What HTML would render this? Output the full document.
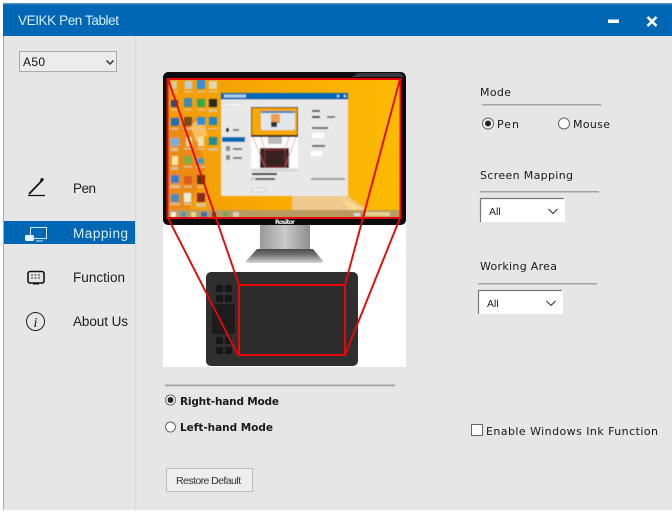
<!DOCTYPE html>
<html><head><meta charset="utf-8"><style>
html,body{margin:0;padding:0;background:#fff;width:672px;height:517px;overflow:hidden}
svg{display:block}
text{font-family:"Liberation Sans",sans-serif}
.d{font-family:"DejaVu Sans",sans-serif;font-size:11px;fill:#1a1a1a}
.n{font-size:13.5px;fill:#1c1c1c}
</style></head><body>
<svg width="672" height="517" viewBox="0 0 672 517" xmlns="http://www.w3.org/2000/svg">
<defs>
<linearGradient id="wp" x1="0" y1="0" x2="1" y2="0"><stop offset="0" stop-color="#f39a0c"/><stop offset=".3" stop-color="#f6a504"/><stop offset="1" stop-color="#fdbb02"/></linearGradient>
<linearGradient id="st" x1="0" y1="0" x2="1" y2="0"><stop offset="0" stop-color="#9a9a9a"/><stop offset=".5" stop-color="#c9c9c9"/><stop offset="1" stop-color="#8e8e8e"/></linearGradient>
<linearGradient id="st2" x1="0" y1="0" x2="0" y2="1"><stop offset="0" stop-color="#4a4a4a"/><stop offset=".45" stop-color="#777"/><stop offset="1" stop-color="#d6d6d6"/></linearGradient>
<filter id="b"><feGaussianBlur stdDeviation=".45"/></filter>
</defs>
<rect x="3" y="3" width="669" height="507" fill="#e6e6e6"/>
<rect x="3" y="3" width="669" height="33" fill="#0067b5"/>
<rect x="3" y="3" width="669" height="1.5" fill="#4f8db8"/>
<rect x="3" y="36" width="1" height="474" fill="#a9a9a9"/>
<rect x="135" y="36" width="1.5" height="474" fill="#d9d9d9"/>
<text x="18" y="25" font-size="13.5" fill="#d9edf9" textLength="101">VEIKK Pen Tablet</text>
<rect x="608" y="19.5" width="11" height="3.5" fill="#fff"/>
<path d="M647.5 17 L656.5 26 M656.5 17 L647.5 26" stroke="#fff" stroke-width="2.6"/>

<!-- device select -->
<rect x="19.5" y="51.5" width="97" height="20" fill="#ececec" stroke="#ababab"/>
<text x="23" y="66" font-size="12" fill="#111" textLength="22">A50</text>
<path d="M106.5 60.5 L110 64 L113.500 60.500" fill="none" stroke="#444" stroke-width="1.6"/>

<!-- nav -->
<rect x="4" y="221" width="131" height="23" fill="#0067b5"/>
<text class="n" x="73" y="193" textLength="23">Pen</text>
<text class="n" x="73" y="238" textLength="55" style="fill:#d9edf9">Mapping</text>
<text class="n" x="73" y="282" textLength="52">Function</text>
<text class="n" x="73" y="326" textLength="55">About Us</text>
<path d="M29 194 L42 180.500" stroke="#111" stroke-width="1.800" fill="none"/>
<path d="M41 181 L43 178.500" stroke="#111" stroke-width="3"/>
<path d="M28 195.500 H45" stroke="#111" stroke-width="1.200"/>
<rect x="30.500" y="227.500" width="16" height="11" fill="none" stroke="#d5e8f5"/>
<path d="M36 241 H43" stroke="#d5e8f5"/>
<rect x="25" y="235" width="9" height="6" rx="1.500" fill="#e8f2f9"/>
<rect x="28" y="271.500" width="16" height="11.500" rx="2" fill="none" stroke="#111" stroke-width="1.600"/>
<path d="M31 275 h2 m1.500 0 h2 m1.500 0 h2 M31 278 h2 m1.500 0 h2 m1.500 0 h2" stroke="#333"/>
<path d="M33 284 h6" stroke="#111"/>
<circle cx="35.500" cy="321.500" r="9" fill="none" stroke="#222" stroke-width="1"/>
<text x="33.500" y="327" font-size="14" font-style="italic" style="font-family:'Liberation Serif',serif" fill="#111">i</text>

<!-- picture panel -->
<rect x="163" y="72" width="243" height="295" fill="#fff"/>
<path d="M260 225 H310 V250 H260 Z" fill="url(#st)"/>
<path d="M257 249 H313 L323 261 Q323 263 320 263 H249 Q246 263 246 261 Z" fill="url(#st2)"/>
<rect x="163" y="72" width="243" height="153" rx="5" fill="#0c0c0c"/>
<path d="M358 73 H400 L404 77 H352 Z" fill="#3a3a3a"/>
<rect x="167" y="79" width="234" height="139" fill="url(#wp)"/>
<g filter="url(#b)">
<path d="M167 130 L196 118 L205 170 L186 218 H167Z" fill="#ec8a12"/>
<path d="M190 125 L202 118 L208 135 L196 142Z" fill="#f8c15a"/>
<path d="M292 196 H348 L365 208 V211 H292Z" fill="#eec88c"/>
<path d="M338 196 L365 210 H350Z" fill="#f9d98e"/>
<rect x="167" y="210" width="234" height="8" fill="#b89a60"/>
<g>
<rect x="171" y="81" width="6" height="8" fill="#d6cd92"/><rect x="185" y="81" width="7" height="8" fill="#b9cfde"/><rect x="197" y="80" width="8" height="9" fill="#2f8fe0"/><rect x="209" y="81" width="8" height="8" fill="#e0d8ae"/>
<rect x="171" y="100" width="7" height="7" fill="#264a8e"/><rect x="184" y="98" width="8" height="9" fill="#3d8bb5"/><rect x="197" y="99" width="8" height="8" fill="#30a84a"/><rect x="209" y="99" width="8" height="8" fill="#2a2a20"/>
<rect x="171" y="118" width="8" height="8" fill="#1d6fc0"/><rect x="184" y="117" width="8" height="9" fill="#7a4a1e"/><rect x="197" y="117" width="8" height="8" fill="#2c8fe0"/><rect x="209" y="117" width="8" height="8" fill="#1d88c8"/>
<rect x="171" y="138" width="8" height="8" fill="#6fb2de"/><rect x="186" y="137" width="6" height="9" fill="#edd98a"/><rect x="198" y="137" width="6" height="9" fill="#ece4b4"/><rect x="209" y="137" width="8" height="8" fill="#1f8d9a"/>
<rect x="172" y="156" width="6" height="9" fill="#f8e4a4"/><rect x="184" y="156" width="8" height="8" fill="#7aae3c"/><rect x="197" y="158" width="7" height="6" fill="#3aa0b8"/>
<rect x="171" y="175" width="8" height="8" fill="#2f7fd0"/><rect x="184" y="176" width="8" height="8" fill="#dc5a28"/><rect x="197" y="175" width="8" height="9" fill="#5a3218"/>
<rect x="171" y="194" width="8" height="8" fill="#3f8fc0"/><rect x="184" y="193" width="7" height="9" fill="#e4eed6"/><rect x="197" y="193" width="8" height="9" fill="#8c2a20"/>
</g>
<g fill="#d9c9a0" opacity=".85">
<rect x="171" y="91" width="7" height="1.500"/><rect x="184" y="91" width="9" height="1.500"/><rect x="197" y="91" width="8" height="1.500"/><rect x="208" y="91" width="10" height="1.500"/>
<rect x="171" y="109" width="7" height="1.500"/><rect x="184" y="109" width="8" height="1.500"/><rect x="197" y="109" width="8" height="1.500"/><rect x="208" y="109" width="9" height="3"/>
<rect x="171" y="128" width="7" height="1.500"/><rect x="184" y="128" width="9" height="1.500"/><rect x="196" y="128" width="10" height="1.500"/><rect x="208" y="128" width="10" height="1.500"/>
<rect x="171" y="148" width="7" height="3"/><rect x="184" y="148" width="8" height="1.500"/><rect x="197" y="148" width="8" height="1.500"/><rect x="208" y="148" width="10" height="3"/>
<rect x="171" y="167" width="7" height="3"/><rect x="184" y="166" width="8" height="1.500"/><rect x="196" y="166" width="10" height="1.500"/>
<rect x="170" y="185" width="10" height="3"/><rect x="184" y="186" width="8" height="1.500"/><rect x="197" y="186" width="8" height="1.500"/>
<rect x="170" y="203" width="10" height="2"/><rect x="184" y="203" width="8" height="2"/><rect x="196" y="203" width="10" height="4"/>
</g>
<rect x="171" y="212" width="5" height="5" fill="#f3efe6"/><rect x="181" y="212" width="5" height="5" fill="#4a9ab0"/><rect x="191" y="212" width="5" height="5" fill="#e6d68c"/><rect x="201" y="212" width="6" height="5" fill="#3a6aa8"/><rect x="212" y="212" width="4" height="5" fill="#444"/><rect x="223" y="212" width="6" height="5" fill="#7aa850"/><rect x="233" y="212" width="6" height="5" fill="#dccdb8"/>
<rect x="354" y="213" width="6" height="3" fill="#d8dce6"/><rect x="366" y="212" width="24" height="4" fill="#e6d090"/>
<!-- nested window -->
<rect x="221" y="93" width="127" height="103" fill="#e8e8e8"/>
<rect x="221" y="93" width="127" height="6.500" fill="#0067b5"/>
<rect x="224" y="94.500" width="22" height="3" fill="#a9cde8"/>
<rect x="337" y="95" width="2" height="2" fill="#cfe4f4"/><rect x="344" y="95" width="2" height="2" fill="#cfe4f4"/>
<rect x="224" y="103" width="18" height="4" fill="#f2f2f2" stroke="#ccc" stroke-width=".5"/>
<rect x="222" y="137" width="23" height="5" fill="#0067b5"/>
<rect x="226" y="128" width="3" height="4" fill="#222"/><rect x="226" y="146" width="4" height="5" fill="#888"/><rect x="226" y="155" width="4" height="5" fill="#888"/>
<rect x="233" y="129" width="6" height="2" fill="#777"/><rect x="233" y="148" width="9" height="2" fill="#777"/><rect x="233" y="157" width="9" height="2" fill="#777"/>
<rect x="251" y="107" width="47" height="61" fill="#fff"/>
<rect x="251" y="107" width="47" height="30" fill="#111"/>
<rect x="252" y="108" width="45" height="27" fill="#f7a800"/>
<rect x="261" y="111" width="34" height="19" fill="#dfe6ec"/><rect x="261" y="111" width="34" height="2" fill="#2c7fc0"/>
<rect x="271" y="114" width="9" height="9" fill="#e8a050"/><rect x="271" y="122" width="6" height="5" fill="#333"/>
<rect x="268" y="137" width="14" height="7" fill="#bbb"/>
<rect x="260" y="148" width="29" height="20" fill="#2a2a2a"/>
<rect x="265" y="150" width="20" height="17" fill="#352020" stroke="#b02020" stroke-width=".8"/>
<path d="M253 137 L265 167 M296 137 L285 167 M261 137 L265 150 M289 137 L285 150" stroke="#e27070" stroke-width=".6"/>
<rect x="251" y="170" width="47" height="1" fill="#bbb"/>
<rect x="252" y="173" width="25" height="2" fill="#222"/>
<circle cx="252" cy="179" r="1.300" fill="#fff" stroke="#555" stroke-width=".4"/><rect x="255" y="178" width="20" height="2" fill="#555"/>
<rect x="252" y="188" width="14" height="4" fill="#eee" stroke="#aaa" stroke-width=".4"/>
<rect x="312" y="110" width="8" height="2" fill="#555"/>
<rect x="312" y="116" width="8" height="2" fill="#333"/><rect x="327" y="116" width="8" height="2" fill="#777"/>
<rect x="312" y="127" width="16" height="2" fill="#666"/><rect x="312" y="133" width="12" height="5" fill="#fff"/>
<rect x="312" y="145" width="13" height="2" fill="#666"/><rect x="311" y="151" width="12" height="5" fill="#fff"/>
<rect x="311" y="178" width="34" height="2" fill="#999"/>
</g>
<rect x="167.500" y="79" width="233" height="139" fill="none" stroke="#e60808" stroke-width="2"/>
<text x="275" y="224" font-size="6" font-weight="bold" fill="#eee" textLength="20" style="font-family:'DejaVu Sans',sans-serif">Rositor</text>
<!-- tablet -->
<rect x="206" y="272" width="152" height="94" rx="5" fill="#2f2f30"/>
<g fill="#171718"><rect x="216" y="285" width="7" height="7" rx="1"/><rect x="225" y="285" width="7" height="7" rx="1"/><rect x="216" y="295" width="7" height="7" rx="1"/><rect x="225" y="295" width="7" height="7" rx="1"/>
<rect x="212" y="304" width="23" height="30" fill="#1c1c1d"/>
<rect x="216" y="337" width="7" height="7" rx="1"/><rect x="225" y="337" width="7" height="7" rx="1"/><rect x="216" y="347" width="7" height="7" rx="1"/><rect x="225" y="347" width="7" height="7" rx="1"/></g>
<rect x="239" y="285" width="106" height="70" fill="#2b2b2c" stroke="#e60808" stroke-width="2"/>
<path d="M168 79 L239 285 M168 218 L238 355 M400 79 L345 285 M400 218 L345 355" stroke="#e60808" stroke-width="1.900" fill="none"/>

<!-- right -->
<text class="d" x="480" y="96" textLength="31">Mode</text>
<rect x="482" y="104" width="119" height="1.500" fill="#a3a3a3"/>
<circle cx="488" cy="123.500" r="5.500" fill="#fff" stroke="#666"/><circle cx="488" cy="123.500" r="3" fill="#222"/>
<text class="d" x="497" y="128" textLength="22">Pen</text>
<circle cx="564" cy="123.500" r="5.500" fill="#fff" stroke="#666"/>
<text class="d" x="573" y="128" textLength="37">Mouse</text>
<text class="d" x="480" y="179" textLength="93">Screen Mapping</text>
<rect x="480" y="191" width="119" height="1.500" fill="#a3a3a3"/>
<rect x="480" y="198" width="85" height="24" fill="#fff"/>
<path d="M480.500 222 V198.500 H564" stroke="#777" fill="none" stroke-width="1.200"/>
<text x="489" y="215" font-size="10.500" fill="#222">All</text>
<path d="M548.500 209 L553 213.500 L557.500 209" fill="none" stroke="#333" stroke-width="1.100"/>
<text class="d" x="480" y="270" textLength="77">Working Area</text>
<rect x="478" y="283" width="119" height="1.500" fill="#a3a3a3"/>
<rect x="478" y="290" width="85" height="24" fill="#fff"/>
<path d="M478.500 314 V290.500 H562" stroke="#777" fill="none" stroke-width="1.200"/>
<text x="487" y="307" font-size="10.500" fill="#222">All</text>
<path d="M546.500 301 L551 305.500 L555.500 301" fill="none" stroke="#333" stroke-width="1.100"/>

<!-- bottom -->
<rect x="165" y="384.500" width="230" height="1.800" fill="#a3a3a3"/>
<circle cx="170.500" cy="400" r="5" fill="#fff" stroke="#666"/><circle cx="170.500" cy="400" r="3" fill="#222"/>
<text class="d" x="180" y="405" font-weight="bold" textLength="99" style="font-size:10.500px">Right-hand Mode</text>
<circle cx="170.500" cy="427" r="5" fill="#fff" stroke="#666"/>
<text class="d" x="180" y="431" font-weight="bold" textLength="93" style="font-size:10.500px">Left-hand Mode</text>
<rect x="166.500" y="468.500" width="86" height="23" fill="#eeeeee" stroke="#bcbcbc"/>
<text x="176" y="484" font-size="10.500" fill="#333" textLength="65">Restore Default</text>
<rect x="471.500" y="424.500" width="11" height="11" fill="#fff" stroke="#666"/>
<text class="d" x="486" y="435" textLength="172">Enable Windows Ink Function</text>
</svg>
</body></html>
